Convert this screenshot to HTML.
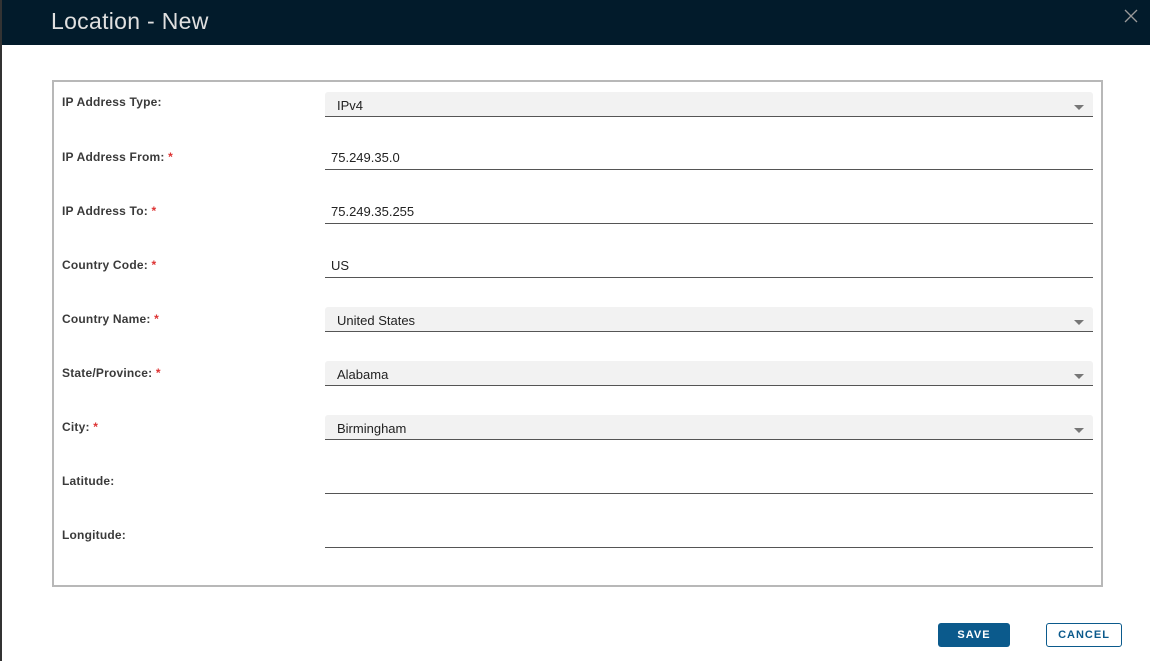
<!DOCTYPE html>
<html><head><style>
body{margin:0;width:1150px;height:661px;background:#fff;font-family:"Liberation Sans",sans-serif;position:relative;overflow:hidden}
.hdr{position:absolute;left:0;top:0;width:1150px;height:45px;background:#021b2b}
.lb{position:absolute;left:0;top:0;width:2px;height:661px;background:#333}
.ttl{position:absolute;left:51px;top:8px;font-size:23px;color:#e0e0e0;letter-spacing:0.3px}
.x{position:absolute;left:1124px;top:9px}
.box{position:absolute;left:52px;top:80px;width:1047px;height:503px;border:2px solid #b8b8b8}
.lbl{position:absolute;left:62px;font-size:12px;font-weight:bold;color:#3a3a3a;letter-spacing:0.2px}
.lbl i{font-style:normal;color:#d33}
.fld{position:absolute;left:325px;width:768px;border-bottom:1px solid #555;font-size:13px;color:#222}
.sel{background:#f2f2f2;height:24px;border-radius:3px 3px 0 0}
.sel span{position:absolute;left:12px;top:6px}
.sel b{position:absolute;right:9px;top:13px;border-left:5px solid transparent;border-right:5px solid transparent;border-top:5px solid #777}
.inp{height:24px}
.inp span{position:absolute;left:6px;top:5px}
.btn{position:absolute;top:623px;height:24px;font-size:11px;font-weight:bold;letter-spacing:1px;text-align:center;line-height:24px;border-radius:3px;box-sizing:border-box}
</style></head><body>
<div class="hdr"></div><div class="lb"></div>
<div class="ttl">Location - New</div>
<svg class="x" width="14" height="14"><path d="M1 1L13 13M13 1L1 13" stroke="#999" stroke-width="1.3"/></svg>
<div class="box"></div>
<div class="lbl" style="top:95px">IP Address Type:</div>
<div class="fld sel" style="top:92px"><span>IPv4</span><b></b></div>
<div class="lbl" style="top:150px">IP Address From: <i>*</i></div>
<div class="fld inp" style="top:145px"><span>75.249.35.0</span></div>
<div class="lbl" style="top:204px">IP Address To: <i>*</i></div>
<div class="fld inp" style="top:199px"><span>75.249.35.255</span></div>
<div class="lbl" style="top:258px">Country Code: <i>*</i></div>
<div class="fld inp" style="top:253px"><span>US</span></div>
<div class="lbl" style="top:312px">Country Name: <i>*</i></div>
<div class="fld sel" style="top:307px"><span>United States</span><b></b></div>
<div class="lbl" style="top:366px">State/Province: <i>*</i></div>
<div class="fld sel" style="top:361px"><span>Alabama</span><b></b></div>
<div class="lbl" style="top:420px">City: <i>*</i></div>
<div class="fld sel" style="top:415px"><span>Birmingham</span><b></b></div>
<div class="lbl" style="top:474px">Latitude:</div>
<div class="fld inp" style="top:469px"></div>
<div class="lbl" style="top:528px">Longitude:</div>
<div class="fld inp" style="top:523px"></div>
<div class="btn" style="left:938px;width:72px;background:#0b5a8c;color:#fff">SAVE</div>
<div class="btn" style="left:1046px;width:76px;border:1px solid #0b5a8c;color:#0b5a8c;line-height:22px">CANCEL</div>
</body></html>
